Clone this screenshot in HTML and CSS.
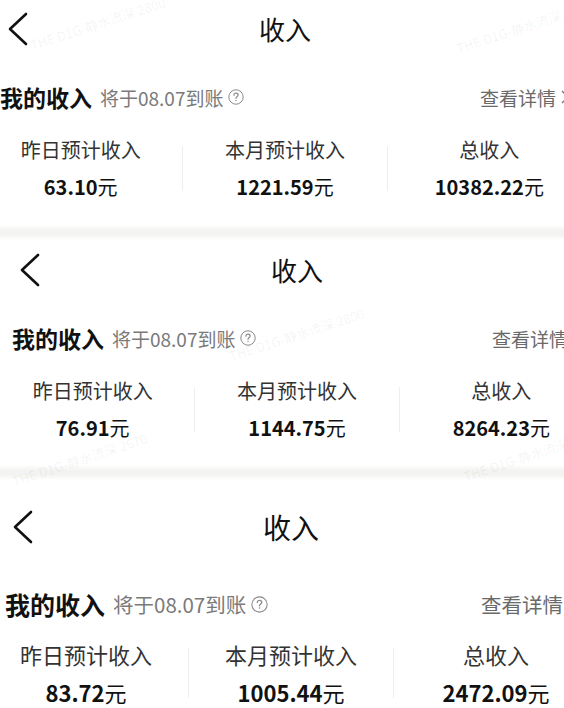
FILE: index.html
```html
<!DOCTYPE html>
<html lang="zh-CN">
<head>
    <meta charset="UTF-8">
    <meta name="viewport" content="width=device-width, initial-scale=1.0">
    <title>收入</title>
    <link rel="stylesheet" href="styles.css">
</head>
<body>

<div class="page">

    <!-- Captura 1 -->
    <section class="panel panel-a">
        <div class="nav">
            <span class="back"><svg viewBox="0 0 22 34" width="22" height="34"><path d="M19 2 L3 17 L19 32" /></svg></span>
            <h1 class="title">收入</h1>
            <span></span>
        </div>
        <div class="summary">
            <span class="summary-title">我的收入</span>
            <span class="summary-date">将于08.07到账</span>
            <svg class="help" viewBox="0 0 16 16" width="16" height="16"><circle cx="8" cy="8" r="7.2" /><path d="M5.9 6.2 C5.9 4.9 6.9 4.2 8 4.2 C9.2 4.2 10.1 5 10.1 6 C10.1 7.4 8 7.6 8 9.3" /><circle class="dot" cx="8" cy="11.4" r="0.7" /></svg>
            <span class="detail">查看详情<svg viewBox="0 0 10 16" width="10" height="16"><path d="M2 2 L8 8 L2 14" /></svg></span>
        </div>
        <div class="stats">
            <div class="stat">
                <div class="stat-label">昨日预计收入</div>
                <div class="stat-value"><b>63.10</b>元</div>
            </div>
            <i class="sep"></i>
            <div class="stat">
                <div class="stat-label">本月预计收入</div>
                <div class="stat-value"><b>1221.59</b>元</div>
            </div>
            <i class="sep"></i>
            <div class="stat">
                <div class="stat-label">总收入</div>
                <div class="stat-value"><b>10382.22</b>元</div>
            </div>
        </div>
        <span class="mark mark-1">THE D1G-静水流深 2800</span>
        <span class="mark mark-2">THE D1G-静水流深</span>
    </section>

    <div class="band"></div>

    <!-- Captura 2 -->
    <section class="panel panel-b">
        <div class="nav">
            <span class="back"><svg viewBox="0 0 22 34" width="22" height="34"><path d="M19 2 L3 17 L19 32" /></svg></span>
            <h1 class="title">收入</h1>
            <span></span>
        </div>
        <div class="summary">
            <span class="summary-title">我的收入</span>
            <span class="summary-date">将于08.07到账</span>
            <svg class="help" viewBox="0 0 16 16" width="16" height="16"><circle cx="8" cy="8" r="7.2" /><path d="M5.9 6.2 C5.9 4.9 6.9 4.2 8 4.2 C9.2 4.2 10.1 5 10.1 6 C10.1 7.4 8 7.6 8 9.3" /><circle class="dot" cx="8" cy="11.4" r="0.7" /></svg>
            <span class="detail">查看详情<svg viewBox="0 0 10 16" width="10" height="16"><path d="M2 2 L8 8 L2 14" /></svg></span>
        </div>
        <div class="stats">
            <div class="stat">
                <div class="stat-label">昨日预计收入</div>
                <div class="stat-value"><b>76.91</b>元</div>
            </div>
            <i class="sep"></i>
            <div class="stat">
                <div class="stat-label">本月预计收入</div>
                <div class="stat-value"><b>1144.75</b>元</div>
            </div>
            <i class="sep"></i>
            <div class="stat">
                <div class="stat-label">总收入</div>
                <div class="stat-value"><b>8264.23</b>元</div>
            </div>
        </div>
        <span class="mark mark-3">THE D1G-静水流深 2800</span>
        <span class="mark mark-4">THE D1G-静水流深 2670</span>
        <span class="mark mark-5">THE D1G-静水流深</span>
    </section>

    <div class="band"></div>

    <!-- Captura 3 -->
    <section class="panel panel-c">
        <div class="nav">
            <span class="back"><svg viewBox="0 0 22 34" width="22" height="34"><path d="M19 2 L3 17 L19 32" /></svg></span>
            <h1 class="title">收入</h1>
            <span></span>
        </div>
        <div class="summary">
            <span class="summary-title">我的收入</span>
            <span class="summary-date">将于08.07到账</span>
            <svg class="help" viewBox="0 0 16 16" width="17" height="17"><circle cx="8" cy="8" r="7.2" /><path d="M5.9 6.2 C5.9 4.9 6.9 4.2 8 4.2 C9.2 4.2 10.1 5 10.1 6 C10.1 7.4 8 7.6 8 9.3" /><circle class="dot" cx="8" cy="11.4" r="0.7" /></svg>
            <span class="detail">查看详情<svg viewBox="0 0 10 16" width="10" height="16"><path d="M2 2 L8 8 L2 14" /></svg></span>
        </div>
        <div class="stats">
            <div class="stat">
                <div class="stat-label">昨日预计收入</div>
                <div class="stat-value"><b>83.72</b>元</div>
            </div>
            <i class="sep"></i>
            <div class="stat">
                <div class="stat-label">本月预计收入</div>
                <div class="stat-value"><b>1005.44</b>元</div>
            </div>
            <i class="sep"></i>
            <div class="stat">
                <div class="stat-label">总收入</div>
                <div class="stat-value"><b>2472.09</b>元</div>
            </div>
        </div>
    </section>

</div>

</body>
</html>
```

FILE: styles.css
```css
body {
    margin: 0;
    padding: 0;
    background-color: #fff;
    font-family: "Noto Sans CJK SC", "Noto Sans", sans-serif;
    color: #111;
    overflow: hidden;
}

.page {
    width: 564px;
    height: 708px;
    overflow: hidden;
}

.panel {
    position: relative;
    width: 612px;
    box-sizing: border-box;
}

/* cada captura esta un poco desplazada */
.panel-a {
    margin-left: -21px;
    height: 225px;
}

.panel-b {
    margin-left: -9px;
    height: 225px;
    padding-top: 1px;
}

.panel-c {
    width: 614px;
    margin-left: -16px;
    height: 228px;
    padding-top: 18px;
}

.nav {
    display: grid;
    grid-template-columns: 1fr auto 1fr;
    align-items: center;
    height: 58px;
}

.back {
    display: flex;
    padding-left: 28px;
}

.back path {
    fill: none;
    stroke: #111;
    stroke-width: 2.6;
    stroke-linecap: round;
    stroke-linejoin: round;
}

.title {
    margin: 0;
    font-size: 26px;
    font-weight: 400;
    line-height: 1;
    color: #111;
}

.summary {
    display: flex;
    align-items: center;
    height: 38px;
    margin-top: 20px;
    padding: 0 21px;
}

.summary-title {
    font-size: 23px;
    font-weight: 600;
    line-height: 1;
}

.summary-date {
    margin-left: 8px;
    font-size: 19px;
    color: #7a7a7a;
    line-height: 1;
}

.help {
    margin-left: 5px;
}

.help circle {
    fill: none;
    stroke: #8a8a8a;
    stroke-width: 1;
}

.help path {
    fill: none;
    stroke: #8a8a8a;
    stroke-width: 1.2;
    stroke-linecap: round;
}

.help .dot {
    fill: #8a8a8a;
    stroke: none;
}

.detail {
    display: flex;
    align-items: center;
    gap: 4px;
    margin-left: auto;
    font-size: 19px;
    color: #6a6a6a;
    line-height: 1;
}

.detail path {
    fill: none;
    stroke: #777;
    stroke-width: 1.4;
}

.stats {
    display: flex;
    align-items: center;
    margin-top: 20px;
}

.stat {
    flex: 1;
    text-align: center;
}

.stat-label {
    height: 28px;
    font-size: 20px;
    line-height: 28px;
    color: #333;
}

.stat-value {
    height: 28px;
    margin-top: 9px;
    font-size: 20px;
    line-height: 28px;
    color: #111;
}

.stat-value b {
    font-weight: 700;
}

.sep {
    width: 1px;
    height: 45px;
    background-color: #eeeeee;
}

/* la tercera captura esta algo mas ampliada */
.panel-c .title {
    font-size: 28px;
}

.panel-c .summary {
    margin-top: 29px;
}

.panel-c .summary-title {
    font-size: 25px;
}

.panel-c .summary-date {
    font-size: 20.5px;
}

.panel-c .detail {
    font-size: 20.5px;
}

.panel-c .stats {
    margin-top: 16px;
}

.panel-c .stat-label,
.panel-c .stat-value {
    height: 30px;
    font-size: 22px;
    line-height: 30px;
}

.panel-c .stat-value {
    margin-top: 8px;
}

.panel-c .sep {
    height: 50px;
}

.band {
    height: 15px;
    background: linear-gradient(to bottom, #fff 0%, #f3f3f1 35%, #f3f3f1 65%, #fff 100%);
}

/* marca de agua */
.mark {
    position: absolute;
    font-size: 13px;
    color: rgba(0, 0, 0, 0.06);
    transform: rotate(-18deg);
    white-space: nowrap;
    pointer-events: none;
}

.mark-1 { left: 48px; top: 14px; }
.mark-2 { left: 475px; top: 22px; }
.mark-3 { left: 235px; top: 85px; }
.mark-4 { left: 18px; top: 210px; }
.mark-5 { left: 470px; top: 210px; }
```
